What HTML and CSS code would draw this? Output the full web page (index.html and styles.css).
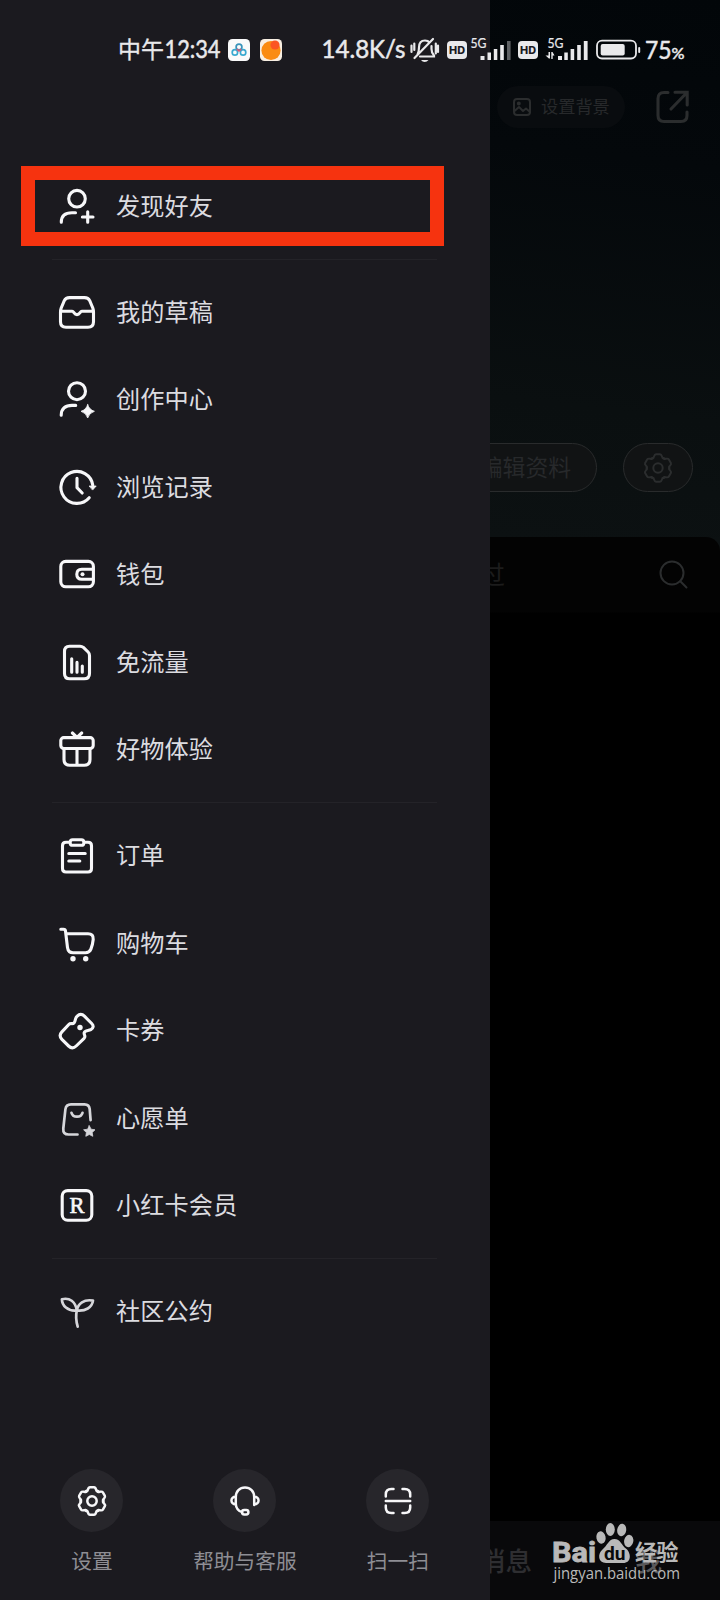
FILE: index.html
```html
<!DOCTYPE html>
<html lang="zh-CN">
<head>
<meta charset="utf-8">
<title>侧边栏</title>
<link rel="stylesheet" href="styles.css">
</head>
<body>
<svg class="defs" width="0" height="0">
  <defs>
    <path id="tooth" d="M-5.7-9.9C-3.7-8.8-4.6-13.7-2-13.7H2C4.6-13.7 3.7-8.8 5.7-9.9"/>
    <g id="gear">
      <use href="#tooth"/><use href="#tooth" transform="rotate(60)"/><use href="#tooth" transform="rotate(120)"/>
      <use href="#tooth" transform="rotate(180)"/><use href="#tooth" transform="rotate(240)"/><use href="#tooth" transform="rotate(300)"/>
      <circle r="4.7"/>
    </g>
  </defs>
</svg>
<div class="screen">
  <aside class="drawer">
    <nav class="menu">
      <a class="row"><svg class="icon" viewBox="0 0 40 40"><circle cx="20" cy="12.7" r="8.3"/><path d="M4.3 36.2C4.3 29.5 8.5 26.7 15 26.7H18.5M30.7 25.7V36.3M25.4 31H36"/></svg><span>发现好友</span></a>
      <hr class="line">
      <a class="row"><svg class="icon" viewBox="0 0 40 40"><path d="M12.5 5.6H27.5Q31.3 5.6 32.7 8.7L35.8 16Q36.5 18 36.5 20V29.7Q36.5 35.2 31 35.2H9Q3.5 35.2 3.5 29.7V20Q3.5 18 4.2 16L7.3 8.7Q8.7 5.6 12.5 5.6ZM4 19.3H15.2C17 19.3 17 22.6 20 22.6S23 19.3 24.8 19.3H36"/></svg><span>我的草稿</span></a>
      <a class="row"><svg class="icon" viewBox="0 0 40 40"><circle cx="20" cy="12.2" r="8.5"/><path d="M4.2 36.2C4.2 29.5 8.5 26.4 15 26.4H18.7"/><path class="solid" d="M30.7 25.6Q32.2 30.8 37.4 32.3Q32.2 33.8 30.7 39Q29.2 33.8 24 32.3Q29.2 30.8 30.7 25.6Z"/></svg><span>创作中心</span></a>
      <a class="row"><svg class="icon" viewBox="0 0 40 40"><path d="M32.2 30.7A16 16 0 1 1 35.8 18.2M20 11.3V20.7L25.2 26"/><path class="solid" d="M32.5 19H39.2L35.8 22.8Z"/></svg><span>浏览记录</span></a>
      <a class="row"><svg class="icon" viewBox="0 0 40 40"><rect x="3.8" y="7.4" width="32.6" height="25.4" rx="5"/><path d="M36 15.2H24.8Q19.8 15.2 19.8 20.2T24.8 25.2H36"/><circle class="dot" cx="25.5" cy="20.2" r="2"/></svg><span>钱包</span></a>
      <a class="row"><svg class="icon" viewBox="0 0 40 40"><path d="M12.5 4.2H23Q25 4.2 26.4 5.4L31.1 10Q32.5 11.4 32.5 13.4V31.5Q32.5 36.8 27.2 36.8H12.8Q7.5 36.8 7.5 31.5V9.5Q7.5 4.2 12.5 4.2ZM14.7 16.8V30.3M20 20.4V30.3M25.3 24V30.3"/></svg><span>免流量</span></a>
      <a class="row"><svg class="icon" viewBox="0 0 40 40"><rect x="3.8" y="8.6" width="32.4" height="10.9" rx="3"/><path d="M7 20V30.5Q7 36.2 12.7 36.2H27.3Q33 36.2 33 30.5V20M20 20V36M15.4 4L20 8.3L24.7 4"/></svg><span>好物体验</span></a>
      <hr class="line">
      <a class="row"><svg class="icon" viewBox="0 0 40 40"><path d="M12 7.2H9Q5.5 7.2 5.5 10.7V33.5Q5.5 37 9 37H31Q34.5 37 34.5 33.5V10.7Q34.5 7.2 31 7.2H28M11.8 18.5H28.2M11.8 26H22.8"/><rect x="13.2" y="4.7" width="13.6" height="5.6" rx="2.4"/></svg><span>订单</span></a>
      <a class="row"><svg class="icon" viewBox="0 0 40 40"><path d="M3.8 6.2H6.5Q8.3 6.2 8.5 8L10.5 24.5Q11.2 29.7 16 29.7H28.5Q32.5 29.7 33.9 26.2Q35.7 21.5 36.2 16.5Q36.6 10.7 31 10.7H9"/><circle class="dot" cx="16" cy="35.7" r="2.7"/><circle class="dot" cx="28.7" cy="35.7" r="2.7"/></svg><span>购物车</span></a>
      <a class="row"><svg class="icon" viewBox="0 0 40 40"><path d="M20.2 6.2Q23.8 2.6 27.4 6.2L34.7 13.5Q38 17 33.8 19.7C31.5 21 28 20.2 27.2 22.7C26.6 24.8 29.2 26 27.1 28.3L19.2 36Q15.4 39.6 11.6 36L4.9 29.4Q1.4 25.6 4.9 21.9L11.8 14.5C13.7 12.5 15.3 14.6 17.1 12.8C18.9 11 17.5 8.6 20.2 6.2Z"/><circle class="dot" cx="23" cy="17.5" r="2.7"/></svg><span>卡券</span></a>
      <a class="row"><svg class="icon soft" viewBox="0 0 40 40"><path d="M33.6 22.2L32.7 11.2Q32.3 6.4 27.5 6.4H14Q9 6.4 8.4 11.3L6.3 30.5Q5.8 36.5 11.5 36.5H20.5M14.5 14.8Q15.7 18.7 20 18.7T25.5 14.8"/><path class="solid" d="M32.3 27.7L34.1 31.2L38 31.8L35.2 34.5L35.8 38.3L32.3 36.5L28.8 38.3L29.4 34.5L26.6 31.8L30.5 31.2Z"/></svg><span>心愿单</span></a>
      <a class="row"><svg class="icon" viewBox="0 0 40 40"><rect x="5.2" y="5.6" width="29.6" height="29.6" rx="5.5"/><text class="r-mark" x="12.6" y="28.2" textLength="15.5">R</text></svg><span>小红卡会员</span></a>
      <hr class="line">
      <a class="row"><svg class="icon soft" viewBox="0 0 40 40"><path d="M20.7 35.7C19 30 18.8 24 19.8 19.5M19.8 19.5C10.5 20.5 5 14.5 4.9 8.2C12.5 6.3 18.5 10.5 19.8 19.5C21 12.5 27 8 36 9.6C35 16.5 28.5 20.5 19.8 19.5"/></svg><span>社区公约</span></a>
    </nav>
    <footer class="tools">
      <a class="tool"><span class="disc"><svg viewBox="-20 -20 40 40"><use href="#gear"/></svg></span>设置</a>
      <a class="tool"><span class="disc"><svg viewBox="-20 -20 40 40"><path d="M9.2 4V-4C9.2-9.8 5.3-13.5 0-13.5S-9.2-9.8-9.2-4V2.5C-9.2 7-6.5 10.3-2.8 11.1M9.2-4.2C15-4.5 15 3.5 9.2 3.4M-9.2-4.2C-15-4.5-15 3.5-9.2 3.4"/><rect x="-3" y="8.9" width="6.4" height="4.5" rx="2.2"/></svg></span>帮助与客服</a>
      <a class="tool"><span class="disc"><svg viewBox="-20 -20 40 40"><path d="M-12.2-4.5V-6.5Q-12.2-12-6.7-12H-4.5M4.5-12H6.7Q12.2-12 12.2-6.5V-4.5M12.2 4.5V6.5Q12.2 12 6.7 12H4.5M-4.5 12H-6.7Q-12.2 12-12.2 6.5V4.5M-12.2 0H12.2"/></svg></span>扫一扫</a>
    </footer>
  </aside>

  <main class="page">
    <section class="profile">
      <div class="top-actions">
        <span class="bg-pill"><svg width="18" height="18" viewBox="0 0 18 18"><rect x="1" y="1" width="16" height="16" rx="3"/><path d="M1.5 13L6 9L10 13L13 10.5L17 14"/><circle cx="5.8" cy="5.5" r="1"/></svg><span>设置背景</span></span>
        <svg class="share" width="34" height="34" viewBox="0 0 34 34"><path d="M12 2.5H8Q2 2.5 2 8.5V25.5Q2 31.5 8 31.5H25Q31 31.5 31 25.5V22"/><path d="M15 19L30.5 3M19 2.3H31.2V15"/></svg>
      </div>
      <div class="edit-actions">
        <span class="pill edit"><span>编辑资料</span></span>
        <span class="pill gear"><svg width="40" height="40" viewBox="-20 -20 40 40"><use href="#gear"/></svg></span>
      </div>
    </section>
    <section class="sheet">
      <span class="tab">赞过</span>
      <svg width="30" height="30" viewBox="0 0 30 30"><circle cx="13" cy="13" r="11.5"/><path d="M21.3 21.3L27.5 27.5"/></svg>
    </section>
    <nav class="tabbar"><span>消息</span><span class="me">我</span></nav>
  </main>

  <div class="highlight"></div>

  <header class="status">
    <span class="time"><svg width="106" height="36"><text class="cn" x="0" y="26" textLength="46">中午</text><text x="46.5" y="26" textLength="56" lengthAdjust="spacingAndGlyphs">12:34</text></svg></span>
    <svg class="app" width="22" height="22" viewBox="0 0 22 22"><rect width="22" height="22" rx="4.5" fill="#fafafa"/><g fill="none" stroke-width="1.7"><circle cx="11" cy="8" r="2.9" stroke="#3a93ba"/><circle cx="6.9" cy="13.4" r="2.7" stroke="#38a9d0"/><circle cx="15.1" cy="13.4" r="2.7" stroke="#38a9d0"/><path d="M8.8 10.2L11 12L13.2 10.2" stroke="#d85876"/></g></svg>
    <svg class="app" width="22" height="22" viewBox="0 0 22 22"><rect width="22" height="22" rx="4.5" fill="#f8eee2"/><circle cx="11" cy="11.5" r="9.6" fill="#fa8b12"/><circle cx="15" cy="6" r="4.6" fill="#fb5522"/></svg>
    <svg class="signals" width="366" height="36" viewBox="320 32 366 36">
      <text x="321.5" y="58" textLength="84" lengthAdjust="spacingAndGlyphs">14.8K/s</text>
      <g class="bell"><path d="M417.5 54.5Q419 52 419 47.5Q419 40.5 425 40.5Q428 40.5 429.5 42.5M431.5 46V49Q431.5 53 434 55.5V56.5H420M414.5 58L433 39M411.5 45.5V52M414.3 43.5V50M435.8 43.5V53.5M438 45.5V52"/><path d="M421 60H428.5Q427 62 424.7 62T421 60Z" fill="#e9e9eb" stroke="none"/></g>
      <rect x="447" y="41" width="20" height="18" rx="4"/><text class="hd" x="449" y="54" textLength="16" lengthAdjust="spacingAndGlyphs">HD</text>
      <text class="g5" x="470.5" y="48" textLength="16" lengthAdjust="spacingAndGlyphs">5G</text>
      <path d="M480.5 56h4v4h-4zM487.5 52.5h3.5V60h-3.5zM493.8 49h3.5V60h-3.5zM500.2 45h3.6V60h-3.6z"/><path d="M507 41h3.6V60H507z" opacity=".4"/>
      <rect x="518" y="41" width="20" height="18" rx="4"/><text class="hd" x="520" y="54" textLength="16" lengthAdjust="spacingAndGlyphs">HD</text>
      <text class="g5" x="547.5" y="48" textLength="16" lengthAdjust="spacingAndGlyphs">5G</text>
      <path d="M545.5 55.5L548.5 55.5V52H550V58.5H548.9ZM551.3 52H552.5L554.5 55.5H552.7V59H551.3ZM558 56h4v4h-4zM564.3 52.5h3.5V60h-3.5zM570.6 49h3.6V60h-3.6zM577.2 45h3.6V60h-3.6zM583.8 41h3.8V60h-3.8z"/>
      <rect x="597" y="40.7" width="39" height="17.8" rx="5" fill="none" stroke="#e9e9eb" stroke-width="1.8"/><rect x="600.7" y="44" width="24" height="11.5" rx="2"/><rect x="638.2" y="47" width="2" height="6" rx="1"/>
      <text x="645" y="58.7" textLength="26.5" lengthAdjust="spacingAndGlyphs">75</text><text class="pct" x="671.5" y="58.7" textLength="13" lengthAdjust="spacingAndGlyphs">%</text>
    </svg>
  </header>

  <svg class="watermark" width="132" height="66" viewBox="550 1520 132 66">
    <text class="logo" x="552" y="1562" textLength="44" lengthAdjust="spacingAndGlyphs">Bai</text>
    <ellipse cx="601" cy="1537.5" rx="4.6" ry="6.2" transform="rotate(-12 601 1537.5)"/><ellipse cx="610.3" cy="1529.5" rx="4.5" ry="6.5"/><ellipse cx="621.7" cy="1530" rx="4.5" ry="6.3" transform="rotate(8 621.7 1530)"/><ellipse cx="628.7" cy="1541" rx="4.6" ry="6.2" transform="rotate(12 628.7 1541)"/>
    <path d="M614.5 1539C620.5 1539 621 1545 626.5 1549C631 1553 632 1563 623 1563H606C598 1563 597.5 1554 602 1550C608 1545 608.5 1539 614.5 1539Z"/>
    <text class="du" x="604" y="1559.5" textLength="21.5" lengthAdjust="spacingAndGlyphs">du</text>
    <text class="exp" x="635" y="1560" textLength="43.5">经验</text>
    <text class="url" x="553.5" y="1579" textLength="126.5" lengthAdjust="spacingAndGlyphs">jingyan.baidu.com</text>
  </svg>
</div>
</body>
</html>
```

FILE: styles.css
```css
* { box-sizing: border-box; }
body { margin: 0; background: #000; font-family: "Noto Sans CJK SC", sans-serif; }
.defs { position: absolute; }
.screen { position: relative; display: flex; width: 720px; height: 1600px; overflow: hidden; }

/* drawer */
.drawer { width: 490px; height: 1600px; padding-top: 162.4px; background: #1b1a1f; display: flex; flex-direction: column; justify-content: space-between; }
.row { display: flex; align-items: center; gap: 19px; height: 87.56px; padding-left: 57px; font-size: 24.2px; line-height: 36px; color: #dcdce0; }
.row span { padding-bottom: 2px; letter-spacing: 0.1px; }
.icon { width: 40px; height: 40px; flex: none; fill: none; stroke: #f7f7f9; stroke-width: 3.1; stroke-linecap: round; stroke-linejoin: round; color: #f7f7f9; }
.soft { stroke: #d6d6da; color: #d6d6da; stroke-width: 2.7; }
.solid { fill: currentColor; stroke-width: 0.8; }
.dot { fill: currentColor; stroke: none; }
.r-mark { font: 22.5px "Liberation Serif", serif; fill: #f7f7f9; stroke: #f7f7f9; stroke-width: 0.6; }
.line { width: 385px; height: 1px; margin: 9px 0 8px 52px; border: 0; background: #242328; }
.tools { display: grid; grid-template-columns: repeat(3, 153px); padding: 0 0 24px 15.4px; }
.tool { display: flex; flex-direction: column; align-items: center; gap: 12px; font-size: 20.7px; line-height: 32px; color: #8e8e94; }
.disc { display: flex; align-items: center; justify-content: center; width: 63px; height: 63px; border-radius: 50%; background: #27262b; }
.disc svg { width: 40px; height: 40px; fill: none; stroke: #f7f7f9; stroke-width: 2.5; stroke-linecap: round; }

/* dimmed page behind the drawer */
.page { display: flex; flex-direction: column; width: 230px; height: 1600px; overflow: hidden; color: #27292b; background: #0c1112; }
.page svg { fill: none; stroke: #2b2d2e; stroke-width: 2; stroke-linecap: round; stroke-linejoin: round; }
.profile { height: 537px; padding-top: 86px; background: linear-gradient(187deg, #020609, #04080b 30%, #0a0f10 75%, #0c1112); }
.top-actions { display: flex; align-items: center; justify-content: space-between; padding: 0 30px 0 7px; height: 42px; }
.bg-pill { display: flex; align-items: center; gap: 10px; width: 128px; height: 42px; padding-left: 16px; border-radius: 21px; background: #090c0f; font-size: 17.2px; white-space: nowrap; }
.bg-pill span { padding-bottom: 3px; }
.top-actions .share { stroke-width: 3.1; stroke-linecap: round; stroke-linejoin: miter; }
.edit-actions { display: flex; justify-content: flex-end; gap: 26px; margin-top: 315px; padding-right: 27px; }
.pill { display: flex; align-items: center; height: 49px; border: 1px solid #292b2c; border-radius: 25px; background: #111314; }
.pill span { padding-bottom: 3px; }
.edit { flex: none; width: 150px; justify-content: flex-end; padding-right: 25px; font-size: 22.8px; white-space: nowrap; }
.gear { flex: none; width: 70px; justify-content: center; }
.sheet { display: flex; justify-content: space-between; align-items: flex-start; height: 984px; padding: 21px 31px 0 0; border-radius: 0 14px 0 0; background: linear-gradient(#030303 0, #030303 75px, #000 76px); }
.tab { margin-left: -35px; font-size: 25px; line-height: 30px; color: #1c1c1c; }
.sheet svg { margin-top: 2px; }
.tabbar { display: flex; justify-content: space-between; height: 79px; padding: 19px 58px 0 0; background: #09090b; color: #2e2e31; font-size: 26.5px; line-height: 40px; font-weight: 500; }
.tabbar span:first-child { margin-left: -11px; }
.me { color: #59595b; }

/* overlays */
.highlight { position: absolute; left: 20.5px; top: 166px; width: 423px; height: 79.5px; border: 14px solid #f6330f; }
.status { position: absolute; left: 118px; top: 32px; display: flex; align-items: center; height: 36px; }
.status .time { height: 36px; }
.status text { font-family: Lato, "Noto Sans", sans-serif; font-size: 24.3px; fill: #e9e9eb; stroke: #e9e9eb; stroke-width: 0.5; }
.status .cn { font-family: "Noto Sans CJK SC", sans-serif; font-size: 23px; stroke-width: 0.3; }
.app { margin-left: 3.5px; }
.app + .app { margin-left: 10px; }
.signals { margin-left: 38px; fill: #e9e9eb; }
.bell { fill: none; stroke: #e9e9eb; stroke-width: 2.2; stroke-linecap: round; }
.status .hd { font-family: Inter, sans-serif; font-size: 10.5px; font-weight: 800; fill: #1b1a1f; stroke: none; }
.status .g5 { font-size: 13.5px; stroke-width: 0.2; }
.status .pct { font-size: 16px; }
.watermark { position: absolute; left: 550px; top: 1520px; fill: #b9b9b9; }
.logo { font: bold 28px Roboto, sans-serif; stroke: #b9b9b9; stroke-width: 0.8; }
.du { font: bold 19px Roboto, sans-serif; fill: #09090b; }
.exp { font: bold 22px "Noto Sans CJK SC", sans-serif; }
.url { font: 500 16.5px "Open Sans", sans-serif; }
```
